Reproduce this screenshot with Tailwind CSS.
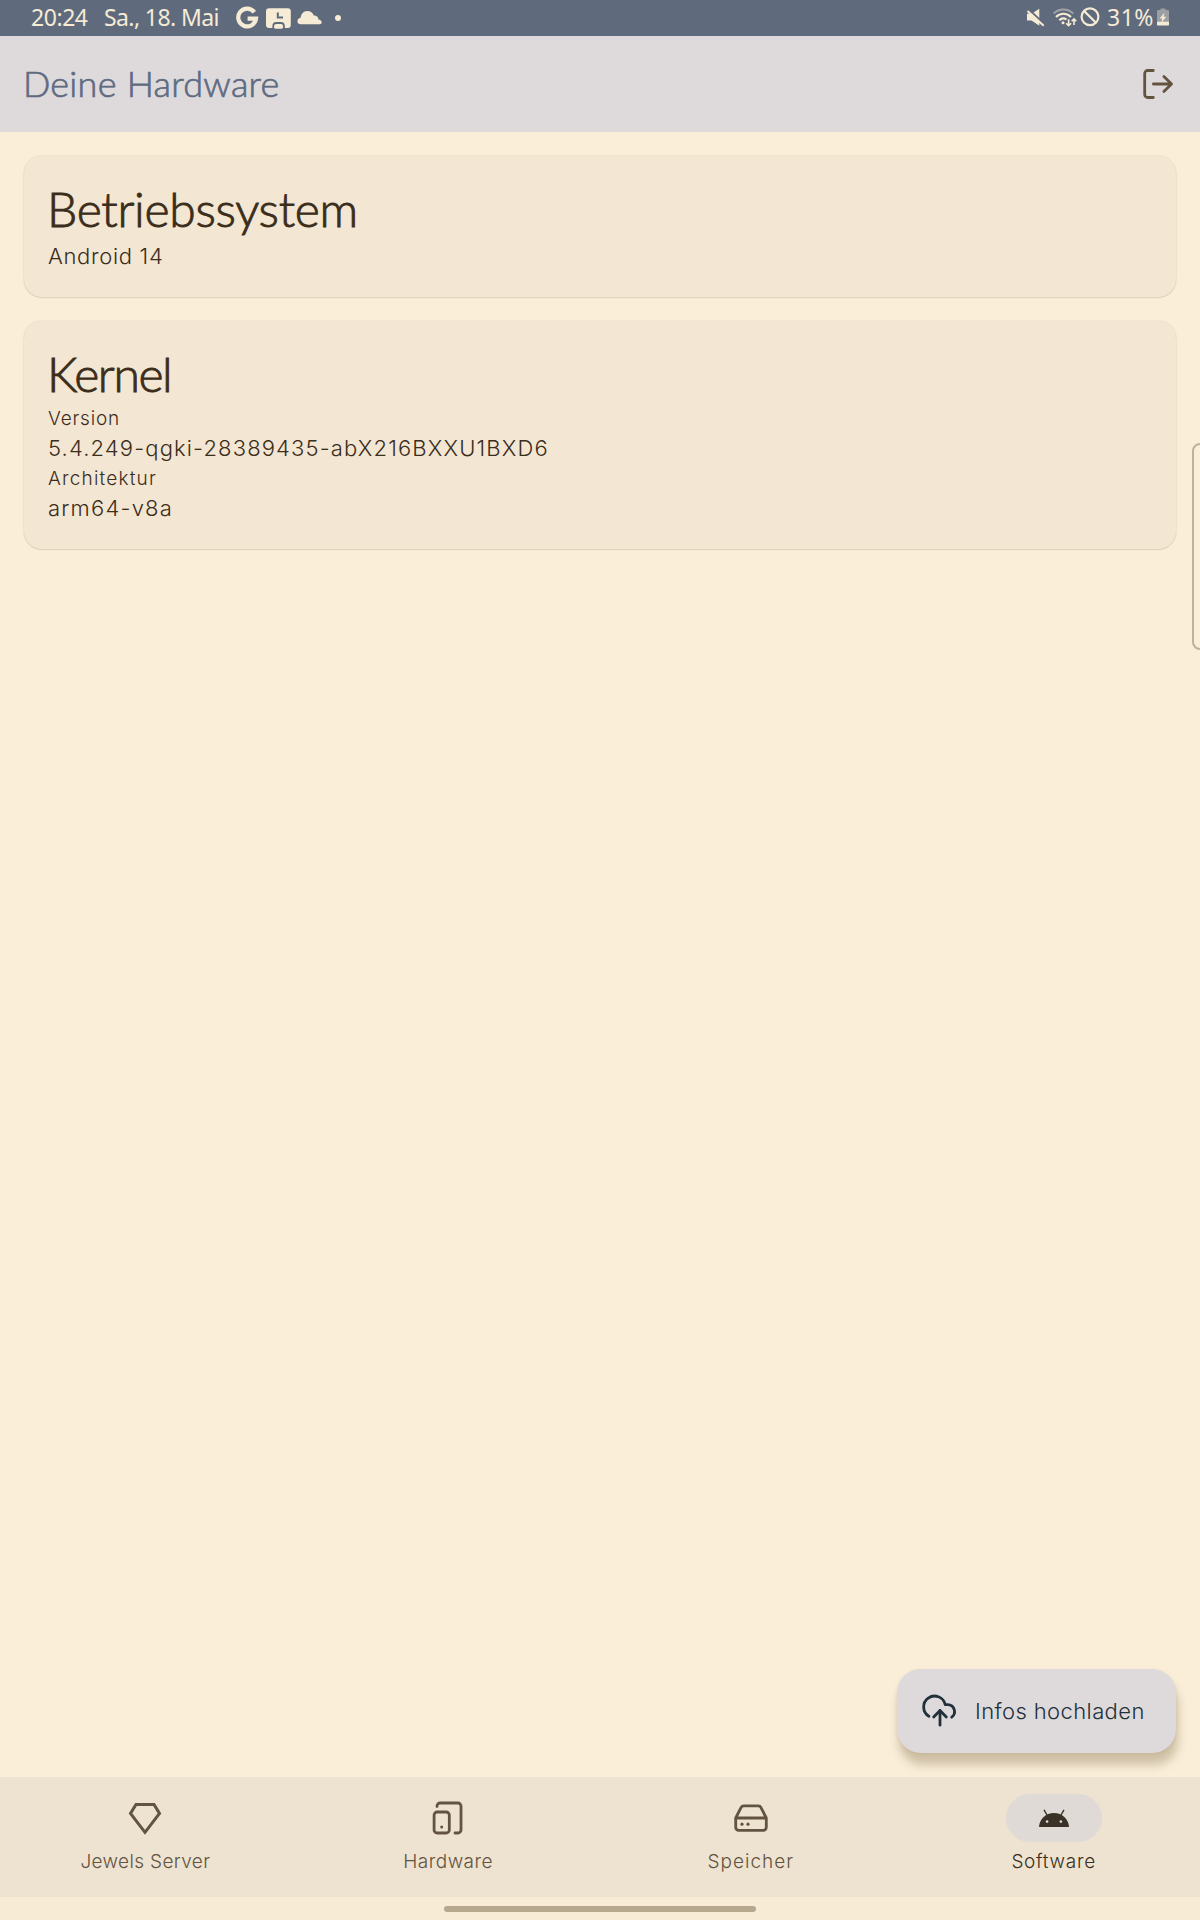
<!DOCTYPE html>
<html lang="de">
<head>
<meta charset="utf-8">
<title>Deine Hardware</title>
<script src="https://cdn.jsdelivr.net/npm/@tailwindcss/browser@4"></script>
</head>
<body class="bg-[#faeed9]">
<div class="relative flex h-[1920px] w-[1200px] flex-col overflow-hidden bg-[#faeed9] font-['Inter',sans-serif] font-light text-[#3b2d1b]">

  <!-- System status bar -->
  <div class="flex h-9 shrink-0 items-center bg-[#5f6a7d] pl-[31px] font-['Noto_Sans',sans-serif] text-[23px] leading-[34px] font-normal whitespace-nowrap text-[#f6ebd5]">
    <span class="w-[73px] pb-0.5 tracking-[-0.45px]">20:24</span>
    <span class="w-[128px] pb-0.5 tracking-[-0.6px]">Sa., 18. Mai</span>
    <svg class="h-9 w-[115px]" viewBox="232 0 115 36" fill="currentColor">
      <path d="M254.3 12.2A8.9 8.9 0 1 0 256 18.6H247.6" fill="none" stroke="currentColor" stroke-width="4.2"/>
      <rect x="266" y="8.3" width="24.8" height="19.6" rx="3"/>
      <path d="M277.8 12.5V17.6H283" fill="none" stroke="#5f6a7d" stroke-width="2"/>
      <path d="M273.3 29V26a3 3 0 0 1 3-3h4.6a3 3 0 0 1 3 3V29" fill="none" stroke="#5f6a7d" stroke-width="1.8"/>
      <rect x="274.3" y="24.8" width="8.4" height="4" rx="1.2"/>
      <path d="M300 24.2a3 3 0 0 1-2.5-3.4c.2-1.7 1.4-2.8 3.2-3 .2-4 3-6.8 6.6-6.8 3.200 0 5.600 1.800 6.300 4.300 3 .2 4.700 1.800 4.900 4.200 1.800.3 3.200 1.300 3.200 2.800 0 1.200-.8 1.900-2 1.900z"/>
      <circle cx="338" cy="17.900" r="3"/>
    </svg>
    <svg class="ml-auto h-9 w-[82px]" viewBox="1025 0 82 36" fill="none" stroke="currentColor">
      <path d="M1027 13.800h4.500l7.800-5v17l-7.800-5.300h-4.500z" fill="currentColor" stroke="none"/>
      <path d="M1028.800 9.500L1045 24.500" stroke="#5f6a7d" stroke-width="1.800"/>
      <path d="M1027.500 11L1043.700 25.700" stroke-width="2"/>
      <path d="M1053.600 13.500a14 14 0 0 1 19.600 0" stroke="#a0a3a6" stroke-width="2"/>
      <path d="M1056 17a10.300 10.300 0 0 1 15 0" stroke-width="2.100"/>
      <path d="M1059.300 20.300a5.700 5.700 0 0 1 7.200-.8" stroke-width="2"/>
      <circle cx="1063" cy="22.800" r="1.500" fill="currentColor" stroke="none"/>
      <path d="M1068.600 19.300v6.400m-2.500-2.500l2.500 2.500 2.500-2.500M1074 25v-6m-2.300 2.300l2.300-2.300 2.300 2.300" stroke-width="1.600"/>
      <circle cx="1090" cy="16.800" r="8.400" stroke-width="2.200"/>
      <path d="M1084 10.900l12 11.900" stroke-width="2.200"/>
    </svg>
    <span class="w-[49px] pb-0.5 tracking-[0.5px]">31%</span>
    <svg class="mr-[30px] h-9 w-[14px] shrink-0" viewBox="1156 0 14 36" fill="currentColor">
      <path d="M1160.500 8.500h5v1.500h2.300a1.200 1.200 0 0 1 1.200 1.200V22h-12V11.200a1.200 1.200 0 0 1 1.200-1.200h2.300z" fill="#9c9fa2"/>
      <path d="M1157 21.800h12v2.600a1.200 1.200 0 0 1-1.200 1.200h-9.600a1.200 1.200 0 0 1-1.200-1.200z"/>
      <path d="M1164.600 12.500l-5 6h2.700l-1 4.200 5-6h-2.700z"/>
    </svg>
  </div>

  <!-- App bar -->
  <header class="flex h-24 shrink-0 items-center justify-between bg-[#dedadb] pr-6 pl-[23px] text-[#5f6b82]">
    <h1 class="pb-[3px] font-['Lato',sans-serif] text-[36px] leading-[44px] tracking-[0.25px] [-webkit-text-stroke:0.7px]">Deine Hardware</h1>
    <svg class="size-9" viewBox="0 0 36 36" fill="none" stroke="#625440" stroke-width="2.800" stroke-linecap="round" stroke-linejoin="round">
      <path d="M13.300 4.500H7.700a3 3 0 0 0-3 3v21a3 3 0 0 0 3 3H13.300M13.400 18H31.500M23.900 10.400L31.500 18l-7.600 7.600"/>
    </svg>
  </header>

  <!-- Cards -->
  <main class="flex grow flex-col gap-6 p-6 text-[22px] leading-[33px]">
    <section class="rounded-[18px] bg-[#f3e6d3] px-6 pt-[23px] pb-6 shadow-[0_0_2px_rgba(90,70,30,0.18),0_1px_1px_rgba(90,70,30,0.12)]">
      <h2 class="-ml-px mb-px font-['Lato',sans-serif] text-[48px] leading-[60px] tracking-[-0.3px] [-webkit-text-stroke:0.9px]">Betriebssystem</h2>
      <p class="tracking-[0.68px]">Android 14</p>
    </section>
    <section class="rounded-[18px] bg-[#f3e6d3] px-6 pt-[23px] pb-6 shadow-[0_0_2px_rgba(90,70,30,0.18),0_1px_1px_rgba(90,70,30,0.12)]">
      <h2 class="-ml-px mb-px font-['Lato',sans-serif] text-[48px] leading-[60px] tracking-[-1.4px] [-webkit-text-stroke:0.9px]">Kernel</h2>
      <p class="text-[19px] leading-[27px] tracking-[0.8px]">Version</p>
      <p class="tracking-[1.14px]">5.4.249-qgki-28389435-abX216BXXU1BXD6</p>
      <p class="text-[19px] leading-[27px] tracking-[1.2px]">Architektur</p>
      <p class="tracking-[1.2px]">arm64-v8a</p>
    </section>
  </main>

  <!-- Bottom navigation -->
  <nav class="grid h-[120px] shrink-0 grid-cols-4 gap-3 bg-[#eee2d1] pr-px text-[19px] leading-6 text-[#625440]">
    <div class="flex flex-col items-center pt-[17px]">
      <span class="flex h-12 w-24 items-center justify-center">
        <svg class="size-9" viewBox="0 0 36 36" fill="none" stroke="currentColor" stroke-width="3"><path d="M9 4.500H27L32.500 13.500 18 32.300 3.500 13.500z"/></svg>
      </span>
      <span class="mt-2 tracking-[0.35px]">Jewels Server</span>
    </div>
    <div class="flex flex-col items-center pt-[17px]">
      <span class="flex h-12 w-24 items-center justify-center">
        <svg class="size-9" viewBox="0 0 36 36" fill="none" stroke="currentColor" stroke-width="2.800" stroke-linecap="round"><rect x="4.100" y="12" width="15.200" height="21" rx="3"/><path d="M7 6.500V6a3 3 0 0 1 3-3H28a3 3 0 0 1 3 3V30a3 3 0 0 1-3 3H25"/><circle cx="11.700" cy="27" r="1.500" fill="currentColor" stroke="none"/></svg>
      </span>
      <span class="mt-2 tracking-[0.5px]">Hardware</span>
    </div>
    <div class="flex flex-col items-center pt-[17px]">
      <span class="flex h-12 w-24 items-center justify-center">
        <svg class="size-9" viewBox="0 0 36 36" fill="none" stroke="currentColor" stroke-width="2.800" stroke-linejoin="round"><path d="M2.700 18L8 7.600A3 3 0 0 1 10.700 5.900H25.300A3 3 0 0 1 28 7.600L33.300 18V27.300a3 3 0 0 1-3 3H5.700a3 3 0 0 1-3-3zM2.700 18H33.300"/><circle cx="9" cy="24.200" r="1.600" fill="currentColor" stroke="none"/><circle cx="15" cy="24.200" r="1.600" fill="currentColor" stroke="none"/></svg>
      </span>
      <span class="mt-2 tracking-[1px]">Speicher</span>
    </div>
    <div class="flex flex-col items-center pt-[17px] text-[#3a3022]">
      <span class="flex h-12 w-24 items-center justify-center rounded-full bg-[#dfdad6]">
        <svg class="size-9" viewBox="0 0 36 36" fill="#3a3226"><path d="M3 27c.4-7.900 7-13.900 15-13.900S32.600 19.100 33 27z"/><path d="M8.300 10.300L11 15M27.700 10.300L25 15" stroke="#3a3226" stroke-width="1.400" stroke-linecap="round"/><circle cx="11.100" cy="21.600" r="1.300" fill="#dfdad6"/><circle cx="24.900" cy="21.600" r="1.300" fill="#dfdad6"/></svg>
      </span>
      <span class="mt-2 tracking-[0.7px]">Software</span>
    </div>
  </nav>

  <!-- Gesture bar -->
  <div class="flex h-[23px] shrink-0 justify-center bg-[#f7ebd5] pt-[9px]">
    <div class="h-1.5 w-[312px] rounded-full bg-[#b5a88f]"></div>
  </div>

  <!-- Upload button, floating over the content -->
  <button class="absolute top-[1669px] right-6 flex h-[84px] w-[279px] items-center rounded-3xl bg-[#dedadb] pl-[25px] text-[22px] tracking-[0.4px] text-[#22303a] shadow-[2px_12px_10px_rgba(110,90,50,0.30),0_1px_4px_rgba(110,90,50,0.10)]">
    <svg class="mr-[17px] size-9" viewBox="0 0 36 36" fill="none" stroke="currentColor" stroke-width="2.800" stroke-linecap="round" stroke-linejoin="round">
      <path d="M6.900 23.300A10.900 10.900 0 1 1 23.200 11.600H25.700A7 7 0 0 1 29.700 24.200M18 32.200V17.500M11.700 24L18 17.500 24.300 24"/>
    </svg>
    Infos hochladen
  </button>

  <!-- Edge panel handle -->
  <div class="absolute top-[443px] left-[1192px] h-[207px] w-5 rounded-lg border-2 border-[#bfb299]"></div>
</div>
</body>
</html>
